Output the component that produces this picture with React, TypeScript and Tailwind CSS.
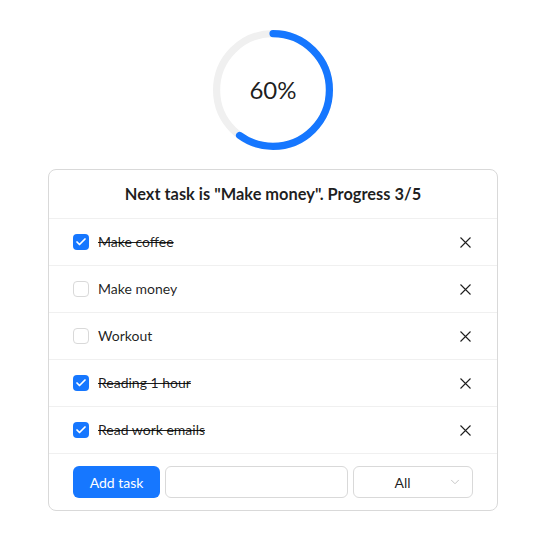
import { Check, ChevronDown } from 'lucide-react';

const tasks = [
  { title: 'Make coffee', done: true },
  { title: 'Make money', done: false },
  { title: 'Workout', done: false },
  { title: 'Reading 1 hour', done: true },
  { title: 'Read work emails', done: true },
];

const font = { fontFamily: 'Lato, "Noto Sans", sans-serif' };

const Ring = ({ percent }: { percent: number }) => {
  const r = 47;
  const c = 2 * Math.PI * r;
  return (
    <div className="relative w-[120px] h-[120px]">
      <svg viewBox="0 0 100 100" className="w-full h-full -rotate-90">
        <circle cx="50" cy="50" r={r} fill="none" stroke="#f0f0f0" strokeWidth="6" />
        <circle
          cx="50"
          cy="50"
          r={r}
          fill="none"
          stroke="#1677ff"
          strokeWidth="6"
          strokeLinecap="round"
          strokeDasharray={`${(c * percent) / 100} ${c}`}
        />
      </svg>
      <span className="absolute inset-0 flex items-center justify-center text-[24px] text-black/[0.88]">
        {percent}%
      </span>
    </div>
  );
};

const CloseX = () => (
  <svg width="11" height="11" viewBox="0 0 11 11" className="mr-[2px]">
    <path d="M0.5 0.5 L10.5 10.5 M10.5 0.5 L0.5 10.5" stroke="#1f1f1f" strokeWidth="1.1" fill="none" />
  </svg>
);

export default function App() {
  const doneCount = tasks.filter((t) => t.done).length;
  return (
    <div className="min-h-screen bg-white pt-[30px] pl-[48px]" style={font}>
      <div className="w-[450px] flex flex-col items-center">
        <Ring percent={60} />

        <div className="mt-[19px] w-full border border-[#d9d9d9] rounded-lg">
          {/* header */}
          <div className="px-6 py-3 text-center text-[16.4px] leading-6 font-bold text-black/[0.88] border-b border-[#f0f0f0]">
            Next task is "Make money". Progress {doneCount}/{tasks.length}
          </div>

          {tasks.map((task, i) => (
            <div
              key={i}
              className="flex items-center justify-between px-6 py-3 border-b border-[#f0f0f0] text-[14px] leading-[22px] text-black/[0.88]"
            >
              <div className="flex items-center gap-[9px]">
                {task.done ? (
                  <span className="w-4 h-4 rounded bg-[#1677ff] flex items-center justify-center">
                    <Check size={12} strokeWidth={3.5} color="white" />
                  </span>
                ) : (
                  <span className="w-4 h-4 rounded border border-[#d9d9d9] bg-white" />
                )}
                <span className={task.done ? 'line-through' : ''}>{task.title}</span>
              </div>
              <CloseX />
            </div>
          ))}

          {/* footer */}
          <div className="flex items-center gap-[5px] px-6 py-3">
            <button className="h-8 w-[87px] shrink-0 whitespace-nowrap rounded-md bg-[#1677ff] text-white text-[14px]">
              Add task
            </button>
            <input className="h-8 min-w-0 flex-1 rounded-md border border-[#d9d9d9] px-[11px] text-[14px] outline-none" />
            <div className="h-8 w-[120px] shrink-0 rounded-md border border-[#d9d9d9] flex items-center pl-[11px] pr-[10px] text-[14px] text-black/[0.88]">
              <span className="flex-1 text-center pr-[8px]">All</span>
              <ChevronDown size={14} color="#bfbfbf" strokeWidth={1.5} />
            </div>
          </div>
        </div>
      </div>
    </div>
  );
}
